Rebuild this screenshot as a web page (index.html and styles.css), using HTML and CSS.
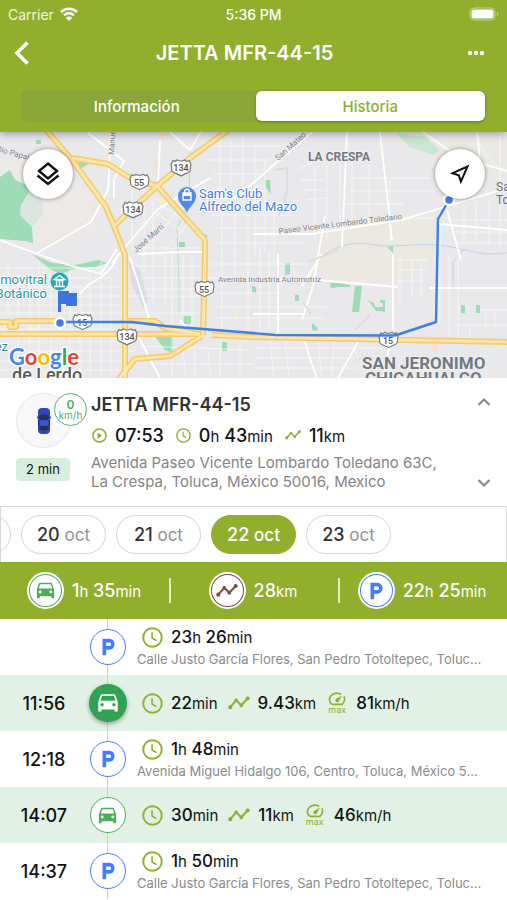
FILE: index.html
```html
<!DOCTYPE html>
<html lang="es">
<head>
  <meta charset="UTF-8">
  <meta name="viewport" content="width=device-width, initial-scale=1">
  <title>JETTA MFR-44-15</title>
  <link rel="stylesheet" href="styles.css">
</head>
<body>
  <svg class="sprite" aria-hidden="true">
    <symbol id="car" viewBox="0 0 24 24">
      <path fill="currentColor" d="M18.92 5.01C18.72 4.42 18.16 4 17.5 4h-11c-.66 0-1.21.42-1.42 1.01L3 11v8c0 .55.45 1 1 1h1c.55 0 1-.45 1-1v-1h12v1c0 .55.45 1 1 1h1c.55 0 1-.45 1-1v-8l-2.08-5.99zM6.5 15c-.83 0-1.5-.67-1.5-1.5S5.67 12 6.5 12s1.5.67 1.5 1.5S7.33 15 6.5 15zm11 0c-.83 0-1.5-.67-1.5-1.5s.67-1.5 1.5-1.5 1.5.67 1.5 1.5-.67 1.5-1.5 1.5zM5 10l1.5-4.5h11L19 10H5z"/>
    </symbol>
    <symbol id="parking" viewBox="0 0 24 24">
      <path fill="currentColor" d="M13.2 3H6v18h4v-6h3.2c3.3 0 6-2.7 6-6s-2.7-6-6-6zm.2 8H10V7h3.4c1.1 0 2 .9 2 2s-.9 2-2 2z"/>
    </symbol>
    <symbol id="clock" viewBox="0 0 24 24">
      <g fill="none" stroke="currentColor" stroke-width="2.2"><circle cx="12" cy="12" r="10.6"/><path d="M11.5 6v6.5l5 3" stroke-width="1.8"/></g>
    </symbol>
    <symbol id="play" viewBox="0 0 24 24">
      <circle cx="12" cy="12" r="10.5" fill="none" stroke="currentColor" stroke-width="2.4"/><path fill="currentColor" d="M9 7v10l7-5z"/>
    </symbol>
    <symbol id="trend" viewBox="0 0 24 16">
      <path d="M2.5 12.5 9 5l5.5 5.5L21.5 3" fill="none" stroke="currentColor" stroke-width="2.2"/>
      <g fill="currentColor"><circle cx="2.5" cy="12.5" r="2.2"/><circle cx="9" cy="5" r="2"/><circle cx="14.5" cy="10.5" r="2"/><circle cx="21.5" cy="3" r="2.2"/></g>
    </symbol>
    <symbol id="gauge" viewBox="0 0 20 15">
      <path d="M4.5 13.5h11c2-2 3-3.8 3-5.5 0-1.3-.3-2.5-.9-3.5M14.5 2.5C13.2 1.5 11.7 1 10 1 5.3 1 1.5 4.3 1.5 8c0 2 1 4 3 5.5" fill="none" stroke="currentColor" stroke-width="1.8"/>
      <path d="M15.5 4 11.8 10.2a2 2 0 1 1-3-2.6z" fill="currentColor"/>
    </symbol>
    <symbol id="shield" viewBox="0 0 22 18">
      <path d="M3 1.5l2 1 2-1.5 4 1.2L15 1l2 1.500 2-1 2 4c-1 2-.2 4-1 6.500-1 2.500-6 2.500-9 5-3-2.500-8-2.500-9-5-.8-2.500 0-4.500-1-6.500z" fill="#fff" stroke="#777" stroke-width="1.2"/>
    </symbol>
  </svg>

  <header class="header">
    <div class="status">
      <span class="carrier">Carrier
        <svg width="18" height="14" viewBox="0 0 18 14" fill="none" stroke="#fff" stroke-width="2.5"><path d="M1 5a11.5 11.5 0 0 1 16 0M4 8.3a7.2 7.2 0 0 1 10 0"/><path d="M9 14 5.9 10.9a4.5 4.5 0 0 1 6.2 0z" fill="#fff" stroke="none"/></svg>
      </span>
      <span class="clock-time">5:36 PM</span>
      <span class="battery"><svg width="30" height="14" viewBox="0 0 30 14"><rect x="1" y="1" width="25" height="12" rx="4" fill="none" stroke="#c4d68a"/><rect x="2.5" y="2.500" width="22" height="9" rx="2.500" fill="#fff"/><path d="M28 5c1.5.5 1.5 3.5 0 4z" fill="#c4d68a"/></svg></span>
    </div>
    <div class="titlebar">
      <button class="icon-btn" aria-label="Atrás"><svg width="16" height="26" viewBox="0 0 16 26"><path d="M13.5 2.5 3 13l10.5 10.5" fill="none" stroke="#fff" stroke-width="3.6"/></svg></button>
      <h1>JETTA MFR-44-15</h1>
      <button class="icon-btn more" aria-label="Más"><svg width="18" height="6" viewBox="0 0 18 6" fill="#fff"><circle cx="3" cy="3" r="2.2"/><circle cx="9" cy="3" r="2.2"/><circle cx="15" cy="3" r="2.2"/></svg></button>
    </div>
    <nav class="tabs">
      <button class="tab">Información</button>
      <button class="tab active">Historia</button>
    </nav>
  </header>

  <section class="map">
    <svg class="map-canvas" viewBox="0 132 507 246" preserveAspectRatio="xMidYMid slice" role="img" aria-label="Mapa">
      <rect y="132" width="507" height="246" fill="#e9e8eb"/>
      <!-- terrain -->
      <path d="M0 160 30 158 72 175 102 208 96 230 60 250 33 243 0 200z" fill="#ece9e6"/>
      <path d="M325 232 360 218 425 214 436 254 393 285 325 280 312 262z" fill="#ebe9e1"/>
      <path d="M385 132 507 132 507 180 470 178 430 160z" fill="#ebe9e4"/>
      <path d="M25 190 42 195 43 214 32 227 20 215z" fill="#dbe4df"/>
      <path d="M128 260 140 270 148 300 143 308 132 285z" fill="#dcdde2"/>
      <!-- parks -->
      <g fill="#9edcb5">
        <path d="M0 177 10 170 15 180 25 184 30 190 21 205 20 215 32 227 33 243 25 241 0 239z"/>
        <path d="M32 254 52 263 75 265 98 260 107 263 95 267 80 267 60 274 50 269z"/>
        <path d="M78 161 90 163 80 169z"/>
        <path d="M153 334h20v19l-8-3z"/>
        <path d="M396 133 425 137 440 150 433 155 410 147z" fill="#c9e5d3"/>
        <path d="M183 316h8v8h-8zM222 342h5v9h-5zM36 140h5v4h-5zM179 242h6v5h-6zM203 233l5 3-4 3zM265 180h5l1 14-5-6zM285 263h5v11l-5 1zM252 285l4 3v6l-4-2zM330 283h8l12 2v2h-12l-7 1zM355 286h7l-3 26h-7zM368 300l6 3 1 4h10v4h-9zM380 300h5v12h-2v-9h-3zM295 295h4v6h-4zM312 323l6 5-1 3-5-1zM461 305h4v8h-4zM476 305h4v8h-4zM387 247l6-1v7z"/>
      </g>
      <path d="M234 311h4v7h-4zM157 200l8-4 3 6-7 5zM28 326h12v12H28zM38 372h10v6H38z" fill="#f6eecb"/>
      <path d="M153 161h6v8h-6zM432 344h7v8h-7zM159 133h6v6h-6z" fill="#fbdfcc"/>
      <!-- water -->
      <g fill="none" stroke="#bfd2ef"><path d="M325 254c20-12 35-12 50-9s40-2 63 0 40 12 69 8M453 290v-28l10-12"/><path d="M190 150l-1 50-12 28 2 55 0 30" stroke="#b5e0c8"/></g>
      <!-- minor streets -->
      <g fill="none" stroke="#f8f8f9" stroke-width=".8">
        <path d="M0 268h118M0 278h112M0 287h120M0 296h200M0 305h122M0 313h200M0 329h120M0 342h120M0 351h135M0 361h130M0 370h120"/>
        <path d="M8 264v50M18 278v100M30 276v100M39 262v116M51 275v103M70 268v110M80 285v93M90 272v106M101 262v114M111 280v94"/>
        <path d="M132 190v60M144 187v85M153 200v104M165 255v52M172 250v130M183 254v70M192 254v84"/>
        <path d="M209 146h72M205 160h66M213 174h47M211 215h80M214 228h70M214 243h90M210 264h98M210 278h75M216 293h66M216 307h110M214 318h110"/>
        <path d="M220 135v70M231 140v52M243 133v70M255 145v110M265 160v93M274 206v60M222 214v114M235 214v60M248 214v120M260 246v88M269 250v80"/>
        <path d="M160 204l30 20M155 212l28 20M170 200l-24 28M180 207l-25 34M190 220l-30 36M200 248h-60M200 266h-65M200 278h-60M200 289h-56"/>
        <path d="M257 348h125M255 358h100M253 368h105M270 338l4 40M285 338l4 40M318 338l4 40M335 338l-4 40M350 338l8 20M140 346l110 4M150 364h105M182 344l4 34M195 350v28M208 350l3 28M220 344v34M240 346v32"/>
        <path d="M297 170l15-8M300 180h25M303 190h22M307 200l20-2M315 167v73M327 166v73M340 162v70M352 150v77M369 165v60M390 180v62M350 178h80M350 191h82M345 204h60M370 218h64"/>
        <path d="M395 260h34M397 270h30M396 281h28M400 257v48M412 259v38M421 262v36M440 218v105M449 255v88M458 255v85M455 288h52M455 325h52M482 310h25M486 314v15M495 312v16M470 325v15"/>
        <path d="M450 220h57M454 232h53M455 243h52M464 205v35M476 202v38M489 200v45M500 205v45M478 144l20 24 9 2M500 132v75"/>
      </g>
      <g fill="none" stroke="#fff" stroke-width="1.8">
        <path d="M111 132 108 190 91 222 60 240 35 254M88 133l36 28-10 18 0 20M0 240l65 24 36 10 16-25M118 254c-5 18-20 25-30 31l-20 22"/>
        <path d="M207 252 182 252 138 254M210 178l-52 31-36 42-10 12M170 132l20 18 12-20M158 186l2-46"/>
        <path d="M312 132 253 183 226 205M253 234h58l90-14 106-32M347 132l-5 115M380 132l12 108M393 255v75M325 216l-12 70-11 34M302 286l20-32M278 254v80M278 280h40l80 7M303 334l6 22 8 22M253 314h52M420 130l40 28 47 13M477 132l5 46M438 224l69 6M430 288h77M447 210l14 50"/>
        <path d="M130 257l20 64M135 330l25 48M180 320l15 18M390 340l-6 38M358 342l-20 36"/>
      </g>
      <path d="M303 302l8 12M355 330l15-15M308 262l30-12M275 170l12-2v24l-8 24" stroke="#dadadd" stroke-width="1.5" fill="none"/>
      <!-- highways -->
      <g fill="none" stroke-linejoin="round">
        <g stroke="#f5c96e" stroke-width="6">
          <path d="M46 130 72 160 106 207 114 226 125 255 125 378"/><path d="M72 158 108 164 130 178 157 186"/><path d="M228 130 190 158 157 186 115 225"/><path d="M157 186 205 240 205 256 203 335"/>
          <path d="M0 334H200M212 335 253 337 507 342"/><path d="M0 322h10v5h6v-6h44"/><path d="M118 380 135 359 170 356 202 336"/><path d="M125 321h30l10 7 35 6"/>
        </g>
        <g stroke="#fde6a5" stroke-width="3">
          <path d="M46 130 72 160 106 207 114 226 125 255 125 378"/><path d="M72 158 108 164 130 178 157 186"/><path d="M228 130 190 158 157 186 115 225"/><path d="M157 186 205 240 205 256 203 335"/>
          <path d="M0 334H200M212 335 253 337 507 342"/><path d="M0 322h10v5h6v-6h44"/><path d="M118 380 135 359 170 356 202 336"/><path d="M125 321h30l10 7 35 6"/>
        </g>
      </g>
      <!-- road shields -->
      <g class="shields">
        <use href="#shield" x="170" y="159" width="22" height="18"/><text x="181" y="171">134</text>
        <use href="#shield" x="129" y="173" width="21" height="18"/><text x="139" y="186">55</text>
        <use href="#shield" x="122" y="201" width="22" height="18"/><text x="133" y="213">134</text>
        <use href="#shield" x="194" y="280" width="21" height="18"/><text x="204" y="293">55</text>
        <use href="#shield" x="72" y="313" width="21" height="18"/><text x="82" y="326">15</text>
        <use href="#shield" x="116" y="328" width="22" height="18"/><text x="127" y="340">134</text>
        <use href="#shield" x="378" y="331" width="21" height="18"/><text x="388" y="344">15</text>
      </g>
      <!-- labels -->
      <g class="street">
        <text transform="translate(-4 151) rotate(16)">Rio Papal</text>
        <text transform="translate(114 155) rotate(-87)">Manuel</text>
        <text transform="translate(136 253) rotate(-42)">José Martí</text>
        <text transform="translate(278 161) rotate(-42)">San Mateo</text>
        <text transform="translate(279 234) rotate(-7)">Paseo Vicente Lombardo Toledano</text>
        <text x="218" y="282">Avenida Industria Automotriz</text>
      </g>
      <g class="place">
        <text x="308" y="161" font-size="12">LA CRESPA</text>
        <text x="362" y="369" font-size="17">SAN JERONIMO</text>
        <text x="365" y="384" font-size="17">CHICAHUALCO</text>
      </g>
      <g class="town"><text x="496" y="191">San</text><text x="496" y="204">Toto</text></g>
      <g class="poi"><text x="199" y="198">Sam's Club</text><text x="199" y="211">Alfredo del Mazo</text></g>
      <g class="museum"><text x="47" y="284">movitral</text><text x="47" y="298">Botánico</text><text x="8" y="351">ez</text></g>
      <text class="city" x="12" y="381">de Lerdo</text>
      <path d="M187 213c-2-7-9-9-9-17a9 9 0 0 1 18 0c0 8-7 10-9 17z" fill="#4d8bf0"/>
      <path d="M183 193h8v7h-8zM184.500 193c0-5 5-5 5 0" fill="none" stroke="#fff" stroke-width="1.4"/><path d="M183 193h8v3h-8z" fill="#fff"/>
      <circle cx="59.5" cy="281.5" r="9" fill="#1fabb5"/>
      <path d="M59.5 275.5 65 279.5H54zM55.5 280.5h8M56.5 281v5M59.5 281v5M62.5 281v5M54 286.500h11" fill="none" stroke="#fff" stroke-width="1.3"/>
      <!-- travelled route -->
      <path d="M60 322H132L165 326 253 333 275 335 395 335.5 436 322 438 219 449 200" fill="none" stroke="#3e7fe6" stroke-width="2.4" stroke-linejoin="round"/>
      <g fill="#3e7fe6" stroke="#fff" stroke-width="2.5"><circle cx="60" cy="323" r="5"/><circle cx="449" cy="200" r="5"/></g>
      <path d="M58 291h11v2h8v13H66v-2h-5v8h-3z" fill="#3e74e0"/>
      <text class="google" x="9" y="365"><tspan fill="#4285f4">G</tspan><tspan fill="#ea4335">o</tspan><tspan fill="#fbbc05">o</tspan><tspan fill="#4285f4">g</tspan><tspan fill="#34a853">l</tspan><tspan fill="#ea4335">e</tspan></text>
    </svg>
    <button class="fab layers" aria-label="Capas"><svg width="24" height="26" viewBox="0 0 24 26" fill="none" stroke="#111" stroke-width="2.4"><path d="M12 2.5 21 10l-9 7.500L3 10z"/><path d="M1.5 14.5 12 23l10.5-8.5"/></svg></button>
    <button class="fab locate" aria-label="Mi ubicación"><svg width="20" height="20" viewBox="0 0 20 20"><path d="M17.5 2.5 2.5 9.2l6.3 2.2 2.1 6.2z" fill="none" stroke="#111" stroke-width="2"/></svg></button>
  </section>

  <section class="vehicle">
    <div class="vehicle-side">
      <div class="avatar">
        <svg width="14" height="28" viewBox="0 0 14 28"><rect x="1" y="1" width="12" height="26" rx="4" fill="#2c47c4"/><path d="M0 9.5h14v2H0z" fill="#2c47c4"/><path d="M2 9c3-2 7-2 10 0l-1 4H3z" fill="#2b2f52"/><path d="M2 22c3 2 7 2 10 0l-1-3H3z" fill="#2b2f52"/><path d="M3 13.5h8v5H3z" fill="#3555df"/><path d="M1.5 13v6M12.5 13v6" stroke="#22286b"/></svg>
        <span class="speed"><b>0</b><span>km/h</span></span>
      </div>
      <span class="ago">2 min</span>
    </div>
    <div class="vehicle-info">
      <h2>JETTA MFR-44-15</h2>
      <div class="metrics">
        <svg class="ico-s"><use href="#play"/></svg><span class="val">07:53</span>
        <svg class="ico-s"><use href="#clock"/></svg><span class="val">0<small>h</small> 43<small>min</small></span>
        <svg class="ico-t"><use href="#trend"/></svg><span class="val">11<small>km</small></span>
      </div>
      <p>Avenida Paseo Vicente Lombardo Toledano 63C, La Crespa, Toluca, México 50016, Mexico</p>
    </div>
    <div class="arrows">
      <button aria-label="Anterior"><svg width="14" height="10" viewBox="0 0 14 10"><path d="M1.5 8 7 2.5 12.5 8" fill="none" stroke="#8a8a8a" stroke-width="2.2"/></svg></button>
      <button aria-label="Siguiente"><svg width="14" height="10" viewBox="0 0 14 10"><path d="M1.5 2 7 7.5 12.5 2" fill="none" stroke="#8a8a8a" stroke-width="2.2"/></svg></button>
    </div>
  </section>

  <nav class="days">
    <button class="day" aria-label="19 oct"></button>
    <button class="day">20 <span>oct</span></button>
    <button class="day">21 <span>oct</span></button>
    <button class="day active">22 <span>oct</span></button>
    <button class="day">23 <span>oct</span></button>
  </nav>

  <section class="summary">
    <div class="total"><span class="ring green"><svg width="23" height="23"><use href="#car"/></svg></span><span>1<small>h</small> 35<small>min</small></span></div>
    <div class="total"><span class="ring brown"><svg width="22" height="15"><use href="#trend"/></svg></span><span>28<small>km</small></span></div>
    <div class="total"><span class="ring blue"><svg width="22" height="22"><use href="#parking"/></svg></span><span>22<small>h</small> 25<small>min</small></span></div>
  </section>

  <ul class="timeline">
    <li class="stop">
      <time></time>
      <span class="node blue"><svg width="22" height="22"><use href="#parking"/></svg></span>
      <div class="entry">
        <div class="data"><svg class="ico"><use href="#clock"/></svg><span class="val">23<small>h</small> 26<small>min</small></span></div>
        <p>Calle Justo García Flores, San Pedro Totoltepec, Toluc...</p>
      </div>
    </li>
    <li class="trip">
      <time>11:56</time>
      <span class="node current"><svg width="26" height="26"><use href="#car"/></svg></span>
      <div class="entry">
        <div class="data">
          <svg class="ico"><use href="#clock"/></svg><span class="val">22<small>min</small></span>
          <svg class="ico-l"><use href="#trend"/></svg><span class="val">9.43<small>km</small></span>
          <span class="max"><svg width="18" height="14"><use href="#gauge"/></svg>max</span><span class="val">81<small>km/h</small></span>
        </div>
      </div>
    </li>
    <li class="stop">
      <time>12:18</time>
      <span class="node blue"><svg width="22" height="22"><use href="#parking"/></svg></span>
      <div class="entry">
        <div class="data"><svg class="ico"><use href="#clock"/></svg><span class="val">1<small>h</small> 48<small>min</small></span></div>
        <p>Avenida Miguel Hidalgo 106, Centro, Toluca, México 5...</p>
      </div>
    </li>
    <li class="trip">
      <time>14:07</time>
      <span class="node green"><svg width="23" height="23"><use href="#car"/></svg></span>
      <div class="entry">
        <div class="data">
          <svg class="ico"><use href="#clock"/></svg><span class="val">30<small>min</small></span>
          <svg class="ico-l"><use href="#trend"/></svg><span class="val">11<small>km</small></span>
          <span class="max"><svg width="18" height="14"><use href="#gauge"/></svg>max</span><span class="val">46<small>km/h</small></span>
        </div>
      </div>
    </li>
    <li class="stop">
      <time>14:37</time>
      <span class="node blue"><svg width="22" height="22"><use href="#parking"/></svg></span>
      <div class="entry">
        <div class="data"><svg class="ico"><use href="#clock"/></svg><span class="val">1<small>h</small> 50<small>min</small></span></div>
        <p>Calle Justo García Flores, San Pedro Totoltepec, Toluc...</p>
      </div>
    </li>
  </ul>
</body>
</html>
```

FILE: styles.css
```css
* {
  box-sizing: border-box;
}

body {
  margin: 0;
  font-family: Inter, "Liberation Sans", sans-serif;
  background: #fff;
  color: #111;
}

h1, h2, p, ul {
  margin: 0;
  padding: 0;
}

button {
  font: inherit;
  color: inherit;
  background: none;
  border: none;
  padding: 0;
  cursor: pointer;
}

svg {
  display: block;
  flex: none;
}

.sprite {
  position: absolute;
  width: 0;
  height: 0;
}

/* header */
.header {
  position: relative;
  z-index: 1;
  background: #91ae2c;
  color: #fff;
  padding-bottom: 10px;
  box-shadow: 0 2px 8px rgba(0, 0, 0, 0.35);
}

.status {
  display: grid;
  grid-template-columns: 1fr auto 1fr;
  align-items: center;
  height: 28px;
  padding: 0 8px;
  font-size: 14px;
}

.carrier {
  display: flex;
  align-items: center;
  gap: 6px;
  color: #f1f5e0;
}

.clock-time {
  font-weight: 500;
}

.battery {
  justify-self: end;
}

.titlebar {
  display: grid;
  grid-template-columns: 40px 1fr 50px;
  align-items: center;
  height: 50px;
  padding: 0 22px 0 14px;
}

.titlebar h1 {
  font-size: 20px;
  font-weight: 600;
  text-align: center;
}

.more {
  justify-self: end;
}

.tabs {
  display: flex;
  gap: 4px;
  height: 32px;
  margin: 12px 21px 0;
  padding: 1px;
  border-radius: 7px;
  background: #8ba638;
}

.tab {
  flex: 1;
  font-size: 15px;
  font-weight: 500;
  border-radius: 6px;
}

.tab.active {
  background: #fff;
  color: #91ae2c;
  box-shadow: 0 1px 3px rgba(0, 0, 0, 0.3);
}

/* map */
.map {
  position: relative;
  height: 246px;
}

.map-canvas {
  width: 100%;
  height: 100%;
}

.map-canvas text {
  font-family: Roboto, sans-serif;
  paint-order: stroke;
}

.shields text {
  font-size: 9px;
  font-weight: 500;
  text-anchor: middle;
  fill: #555;
}

.street text {
  font-size: 8px;
  fill: #7d7d80;
  stroke: #f2f2f4;
  stroke-width: 1px;
}

.place text {
  font-weight: 700;
  fill: #6f7a83;
  stroke: #f2f2f4;
  stroke-width: 2px;
}

.town text {
  font-size: 12px;
  fill: #6a6f75;
}

.poi text {
  font-size: 13px;
  fill: #3f7ee0;
  stroke: #fff;
  stroke-width: 2px;
}

.museum text {
  font-size: 13px;
  text-anchor: end;
  fill: #2b98a5;
  stroke: #fff;
  stroke-width: 2px;
}

.map-canvas .city {
  font-size: 18px;
  font-weight: 500;
  fill: #55585c;
  stroke: #fff;
  stroke-width: 2px;
}

.map-canvas .google {
  font-family: Lato, sans-serif;
  font-size: 22px;
  font-weight: 700;
  stroke: #fff;
  stroke-width: 3px;
}

.fab {
  position: absolute;
  top: 17px;
  width: 50px;
  height: 50px;
  display: flex;
  align-items: center;
  justify-content: center;
  background: #fff;
  border-radius: 50%;
  box-shadow: 0 0 4px rgba(0, 0, 0, 0.45);
}

.layers {
  left: 23px;
}

.locate {
  right: 22px;
}

/* vehicle card */
.vehicle {
  display: flex;
  padding: 15px 16px 15px;
}

.vehicle-side {
  width: 75px;
}

.avatar {
  position: relative;
  width: 55px;
  height: 55px;
  display: flex;
  align-items: center;
  justify-content: center;
  background: #f8f8fa;
  border: 1px solid #e6e6ea;
  border-radius: 50%;
}

.speed {
  position: absolute;
  top: -1px;
  right: -17px;
  width: 33px;
  height: 33px;
  display: flex;
  flex-direction: column;
  align-items: center;
  justify-content: center;
  background: #fff;
  border: 1px solid #52b36c;
  border-radius: 50%;
  color: #4caf67;
  font-size: 10px;
  line-height: 11px;
}

.speed b {
  font-size: 12px;
  font-weight: 600;
}

.ago {
  display: block;
  width: 54px;
  margin-top: 10px;
  border-radius: 4px;
  background: #d8eedd;
  font-size: 13px;
  line-height: 23px;
  text-align: center;
}

.vehicle-info {
  flex: 1;
}

.vehicle-info h2 {
  font-size: 18px;
  font-weight: 600;
  line-height: 24px;
  color: #333;
}

.metrics {
  display: flex;
  align-items: center;
  height: 36px;
  padding-left: 1px;
}

.metrics .val {
  margin: 0 12px 0 8px;
}

.val {
  font-size: 18px;
  font-weight: 500;
  white-space: nowrap;
}

small {
  font-size: 15px;
  font-weight: 400;
}

.ico-s, .ico-t, .ico, .ico-l, .max {
  color: #91ae2c;
}

.ico-s {
  width: 15px;
  height: 15px;
}

.ico-t {
  width: 16px;
  height: 12px;
}

.vehicle-info p {
  padding-right: 20px;
  font-size: 15px;
  line-height: 19px;
  color: #858585;
}

.arrows {
  display: flex;
  flex-direction: column;
  justify-content: space-between;
  padding: 4px 0 3px;
}

/* day picker */
.days {
  display: flex;
  gap: 10px;
  height: 56px;
  padding-top: 8px;
  border: 1px solid #d9d9d9;
  border-bottom: none;
  overflow: hidden;
}

.day {
  flex: none;
  width: 85px;
  height: 39px;
  border: 1px solid #d6d6d6;
  border-radius: 20px;
  font-size: 18px;
  font-weight: 500;
  color: #333;
}

.day:first-child {
  margin-left: -75px;
}

.day span {
  font-size: 17px;
  font-weight: 400;
  color: #919191;
}

.day.active {
  background: #91ae2c;
  border-color: #91ae2c;
  color: #fff;
}

.day.active span {
  color: #fff;
  font-weight: 500;
}

/* totals */
.summary {
  display: flex;
  align-items: center;
  height: 57px;
  background: #91ae2c;
  color: #fff;
}

.total {
  flex: 1;
  display: flex;
  align-items: center;
  justify-content: center;
  gap: 9px;
  position: relative;
  font-size: 18px;
  font-weight: 500;
}

.total + .total::before {
  content: "";
  position: absolute;
  left: 0;
  width: 2px;
  height: 25px;
  background: #e3ecc4;
}

.ring {
  width: 35px;
  height: 35px;
  display: flex;
  align-items: center;
  justify-content: center;
  border: 2px solid currentColor;
  border-radius: 50%;
  background: #fff;
  outline: 2px solid #fff;
  outline-offset: -1px;
}

.green {
  color: #4caf57;
}

.brown {
  color: #7b4a48;
}

.blue {
  color: #437fee;
}

/* timeline */
.timeline {
  list-style: none;
}

.timeline li {
  display: grid;
  grid-template-columns: 88px 39px 1fr;
  align-items: center;
  height: 56px;
  padding-right: 10px;
  background: linear-gradient(#cfcfcf, #cfcfcf) 107px 0 / 1px 100% no-repeat;
}

.timeline li.trip {
  background-color: #e1f1e6;
}

.timeline time {
  font-size: 18px;
  font-weight: 500;
  text-align: center;
}

.node {
  justify-self: center;
  width: 36px;
  height: 36px;
  display: flex;
  align-items: center;
  justify-content: center;
  border: 1px solid currentColor;
  border-radius: 50%;
  background: #fff;
}

.node.current {
  width: 38px;
  height: 38px;
  border: none;
  background: #2fa350;
  color: #fff;
  box-shadow: 0 2px 4px rgba(0, 0, 0, 0.35);
}

.entry {
  min-width: 0;
  padding-left: 10px;
}

.data {
  display: flex;
  align-items: center;
  height: 24px;
  padding-left: 5px;
}

.data .val {
  font-size: 17px;
  margin: 0 10px 0 8px;
}

.data small {
  font-size: 15px;
}

.ico {
  width: 21px;
  height: 21px;
}

.ico-l {
  width: 22px;
  height: 16px;
}

.max {
  display: flex;
  flex-direction: column;
  align-items: center;
  margin: 0 2px;
  font-size: 9px;
  line-height: 8px;
}

.entry p {
  font-size: 13px;
  line-height: 20px;
  color: #8b8b8b;
  white-space: nowrap;
  overflow: hidden;
}
```
